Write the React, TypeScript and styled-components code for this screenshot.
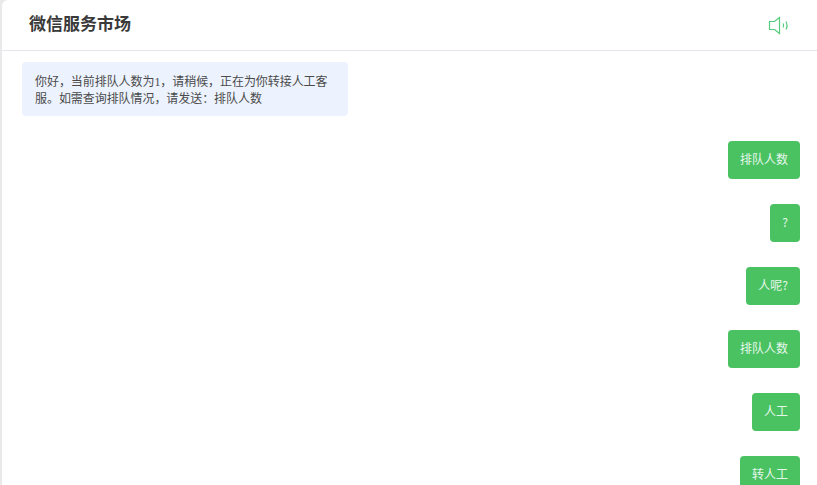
import React from "react";
import styled, { createGlobalStyle } from "styled-components";

const GlobalStyle = createGlobalStyle`
  html, body {
    margin: 0;
    height: 100%;
    overflow: hidden;
    background: #e9e9e9;
  }
  #root {
    height: 100%;
  }
`;

const Panel = styled.div`
  height: 100vh;
  margin-left: 2px;
  background: #fff;
  border-top-left-radius: 6px;
  overflow: hidden;
  display: flex;
  flex-direction: column;
`;

const Header = styled.header`
  flex: none;
  height: 50px;
  box-sizing: content-box;
  border-bottom: 1px solid #e6e6ee;
  padding: 0 27px 0 27px;
  display: flex;
  align-items: center;
  justify-content: space-between;
`;

const Title = styled.h1`
  margin: 0 0 6px;
  font: 700 17px/1 "Noto Sans CJK SC", "Liberation Sans", sans-serif;
  color: #3a3a3a;
`;

const MessageList = styled.div`
  flex: 1;
  padding: 11px 17px 0 20px;
  display: flex;
  flex-direction: column;
  gap: 25px;
`;

const Bubble = styled.div<{ $mine?: boolean }>`
  box-sizing: border-box;
  padding: ${(p) => (p.$mine ? "0 12px" : "12px 13px 0")};
  border-radius: 4px;
  font-size: 12px;
  line-height: ${(p) => (p.$mine ? "36px" : "17px")};
  letter-spacing: ${(p) => (p.$mine ? "0" : "-0.06px")};
  font-family: ${(p) =>
    p.$mine
      ? '"Noto Sans CJK SC", "Liberation Sans", sans-serif'
      : '"Liberation Serif", "Noto Sans CJK SC", serif'};
  align-self: ${(p) => (p.$mine ? "flex-end" : "flex-start")};
  width: ${(p) => (p.$mine ? "auto" : "326px")};
  height: ${(p) => (p.$mine ? "38px" : "54px")};
  background: ${(p) => (p.$mine ? "#4ac262" : "#edf3fe")};
  color: ${(p) => (p.$mine ? "#e6f7ea" : "#4a4a4a")};
`;

const SpeakerIcon = () => (
  <svg width="22" height="20" viewBox="0 0 22 20" fill="none" stroke="#55cc7c" strokeWidth="1.2">
    <path d="M1.5 6.500h5L11.500 2.500v16L6.500 14.500h-5z" />
    <path d="M15.200 8.500c.5 1.300.5 2.700 0 4" />
    <path d="M18 6.500c1.300 2.500 1.300 5.500 0 8" />
  </svg>
);

const mine = ["排队人数", "?", "人呢?", "排队人数", "人工", "转人工"];

export default function App() {
  return (
    <>
      <GlobalStyle />
      <Panel>
        <Header>
          <Title>微信服务市场</Title>
          <SpeakerIcon />
        </Header>
        <MessageList>
          <Bubble>
            你好，当前排队人数为1，请稍候，正在为你转接人工客服。如需查询排队情况，请发送：排队人数
          </Bubble>
          {mine.map((text, index) => (
            <Bubble $mine key={index}>
              {text}
            </Bubble>
          ))}
        </MessageList>
      </Panel>
    </>
  );
}
